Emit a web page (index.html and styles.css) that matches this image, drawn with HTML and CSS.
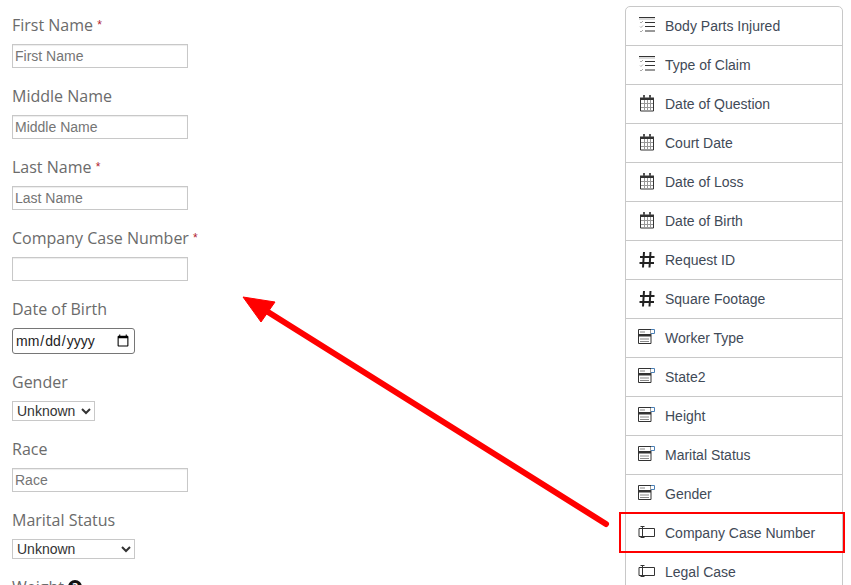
FILE: index.html
```html
<!DOCTYPE html>
<html lang="en">
  <head>
    <meta charset="UTF-8" />
    <title>Form Builder</title>
    <link rel="stylesheet" href="styles.css">
  </head>
  <body>
    <svg class="iconDefs" width="0" height="0">
      <symbol id="icon-list" viewBox="0 0 18 18">
        <path d="M1 .5h16M7 5.500h10M7 9.500h10M7 14h10" stroke="#333" fill="none" />
        <path d="M1 2h16" stroke="#bbb" fill="none" />
        <path d="M2 5l1 1 2-2M2 9.500l1 1 2-2M2 14l1 1 2-2" stroke="#aaa" fill="none" />
      </symbol>
      <symbol id="icon-calendar" viewBox="0 0 18 18">
        <path d="M2.500 3.500h13v12.500h-13z" fill="#fff" stroke="#333" />
        <path d="M2 2.500h14v2.500H2z" fill="#333" />
        <path d="M5 0h2v3H5zM11 0h2v3h-2z" fill="#555" />
        <path d="M6.500 5v11M9.500 5v11M12.500 5v11M3 8.500h12M3 12.500h12" stroke="#999" fill="none" />
      </symbol>
      <symbol id="icon-hash" viewBox="0 0 18 18">
        <path d="M6 1L5 16.500M12.500 1l-1 15.500M2 6h14.500M1.500 12H16" stroke="#222" stroke-width="2" fill="none" />
      </symbol>
      <symbol id="icon-form" viewBox="0 0 18 18">
        <path d="M.500 .500h12.500v14H.500z" fill="#fff" stroke="#333" />
        <path d="M1 5h12v2.500H1z" fill="#333" />
        <path d="M2 3h5M2 10h9M2 12.500h9" stroke="#888" fill="none" />
        <path d="M13 .500h3.500v4H13" fill="#fff" stroke="#4a7fb5" />
      </symbol>
      <symbol id="icon-input" viewBox="0 0 18 18">
        <path d="M4.500 4.500h12v8h-12M4.500 4.500H1v8h3.500" fill="none" stroke="#333" />
        <path d="M4.500 2v12M2.500 2.500h4M2.500 13.500h4" fill="none" stroke="#333" />
      </symbol>
    </svg>

    <div class="allContent">
      <form class="formCol">
        <div class="field">
          <label>First Name <span class="req">*</span></label>
          <input class="textInput" type="text" placeholder="First Name" />
        </div>
        <div class="field">
          <label>Middle Name</label>
          <input class="textInput" type="text" placeholder="Middle Name" />
        </div>
        <div class="field">
          <label>Last Name <span class="req">*</span></label>
          <input class="textInput" type="text" placeholder="Last Name" />
        </div>
        <div class="field">
          <label>Company Case Number <span class="req">*</span></label>
          <input class="textInput" type="text" />
        </div>
        <div class="field">
          <label>Date of Birth</label>
          <input class="dateInput" type="date" />
        </div>
        <div class="field">
          <label>Gender</label>
          <select class="selectInput">
            <option>Unknown</option>
          </select>
        </div>
        <div class="field">
          <label>Race</label>
          <input class="textInput" type="text" placeholder="Race" />
        </div>
        <div class="field">
          <label>Marital Status</label>
          <select class="selectInput wide">
            <option>Unknown</option>
          </select>
        </div>
        <div class="field">
          <label>Weight <span class="helpDot">?</span></label>
        </div>
      </form>

      <ul class="fieldList">
        <li><svg class="icon"><use href="#icon-list" /></svg>Body Parts Injured</li>
        <li><svg class="icon"><use href="#icon-list" /></svg>Type of Claim</li>
        <li><svg class="icon"><use href="#icon-calendar" /></svg>Date of Question</li>
        <li><svg class="icon"><use href="#icon-calendar" /></svg>Court Date</li>
        <li><svg class="icon"><use href="#icon-calendar" /></svg>Date of Loss</li>
        <li><svg class="icon"><use href="#icon-calendar" /></svg>Date of Birth</li>
        <li><svg class="icon"><use href="#icon-hash" /></svg>Request ID</li>
        <li><svg class="icon"><use href="#icon-hash" /></svg>Square Footage</li>
        <li><svg class="icon"><use href="#icon-form" /></svg>Worker Type</li>
        <li><svg class="icon"><use href="#icon-form" /></svg>State2</li>
        <li><svg class="icon"><use href="#icon-form" /></svg>Height</li>
        <li><svg class="icon"><use href="#icon-form" /></svg>Marital Status</li>
        <li><svg class="icon"><use href="#icon-form" /></svg>Gender</li>
        <li class="highlight"><svg class="icon"><use href="#icon-input" /></svg>Company Case Number</li>
        <li><svg class="icon"><use href="#icon-input" /></svg>Legal Case</li>
      </ul>
    </div>

    <!-- red annotation arrow -->
    <svg class="arrow" width="851" height="585">
      <path d="M606 524L268 312" stroke="#ff0000" stroke-width="6" stroke-linecap="round" fill="none" />
      <path d="M243 297L275 302L261 322Z" fill="#ff0000" stroke="#ff0000" />
    </svg>
  </body>
</html>
```

FILE: styles.css
```css
html,
body {
  height: 585px;
  overflow: hidden;
}

body {
  margin: 0;
  background-color: #ffffff;
  position: relative;
  font-family: "Liberation Sans", Arial, sans-serif;
}

.iconDefs {
  position: absolute;
}

.allContent {
  display: flex;
  justify-content: space-between;
  align-items: flex-start;
  padding: 6px 8px 0 12px;
}

.formCol {
  padding-top: 7px;
}

.field {
  margin-bottom: 16px;
}

.field label {
  display: block;
  height: 24px;
  line-height: 24px;
  margin-bottom: 7px;
  font-family: "Open Sans", sans-serif;
  font-size: 16px;
  color: #6b6b6b;
}

.req {
  color: #b01c2e;
  font-family: "Liberation Sans", Arial, sans-serif;
  font-size: 12px;
  vertical-align: 2px;
}

.helpDot {
  display: inline-block;
  width: 14px;
  height: 14px;
  line-height: 14px;
  border-radius: 50%;
  background: #111;
  color: #fff;
  font-size: 11px;
  font-weight: bold;
  text-align: center;
  vertical-align: 2px;
}

.textInput {
  display: block;
  box-sizing: border-box;
  width: 176px;
  height: 24px;
  padding: 0 2px;
  border: 1px solid #c8c8c8;
  box-shadow: inset 0 1px 1px rgba(0, 0, 0, 0.075);
  font-family: "Liberation Sans", Arial, sans-serif;
  font-size: 14px;
}

.textInput::placeholder {
  color: #757575;
}

.dateInput {
  display: block;
  box-sizing: border-box;
  width: 123px;
  height: 26px;
  padding: 0 2px;
  border: 1px solid #767676;
  border-radius: 3px;
  font-family: "Liberation Sans", Arial, sans-serif;
  font-size: 14px;
  color: #222;
}

.selectInput {
  display: block;
  box-sizing: border-box;
  width: 83px;
  height: 20px;
  border: 1px solid #c8c8c8;
  background: #fff;
  font-family: "Liberation Sans", Arial, sans-serif;
  font-size: 14px;
  color: #333;
}

.selectInput.wide {
  width: 123px;
}

.fieldList {
  width: 218px;
  box-sizing: border-box;
  margin: 0;
  padding: 0;
  list-style: none;
  border: 1px solid #c8c8c8;
  border-radius: 5px 5px 0 0;
}

.fieldList li {
  position: relative;
  display: flex;
  align-items: center;
  height: 38px;
  padding-left: 12px;
  font-size: 14px;
  color: #3f4a57;
  border-bottom: 1px solid #c8c8c8;
}

.icon {
  width: 18px;
  height: 18px;
  margin-right: 9px;
  flex-shrink: 0;
}

.highlight::after {
  content: "";
  position: absolute;
  top: -2px;
  bottom: -1px;
  left: -7px;
  right: -3px;
  border: 2px solid #ff0000;
}

.arrow {
  position: absolute;
  top: 0;
  left: 0;
  pointer-events: none;
}
```
